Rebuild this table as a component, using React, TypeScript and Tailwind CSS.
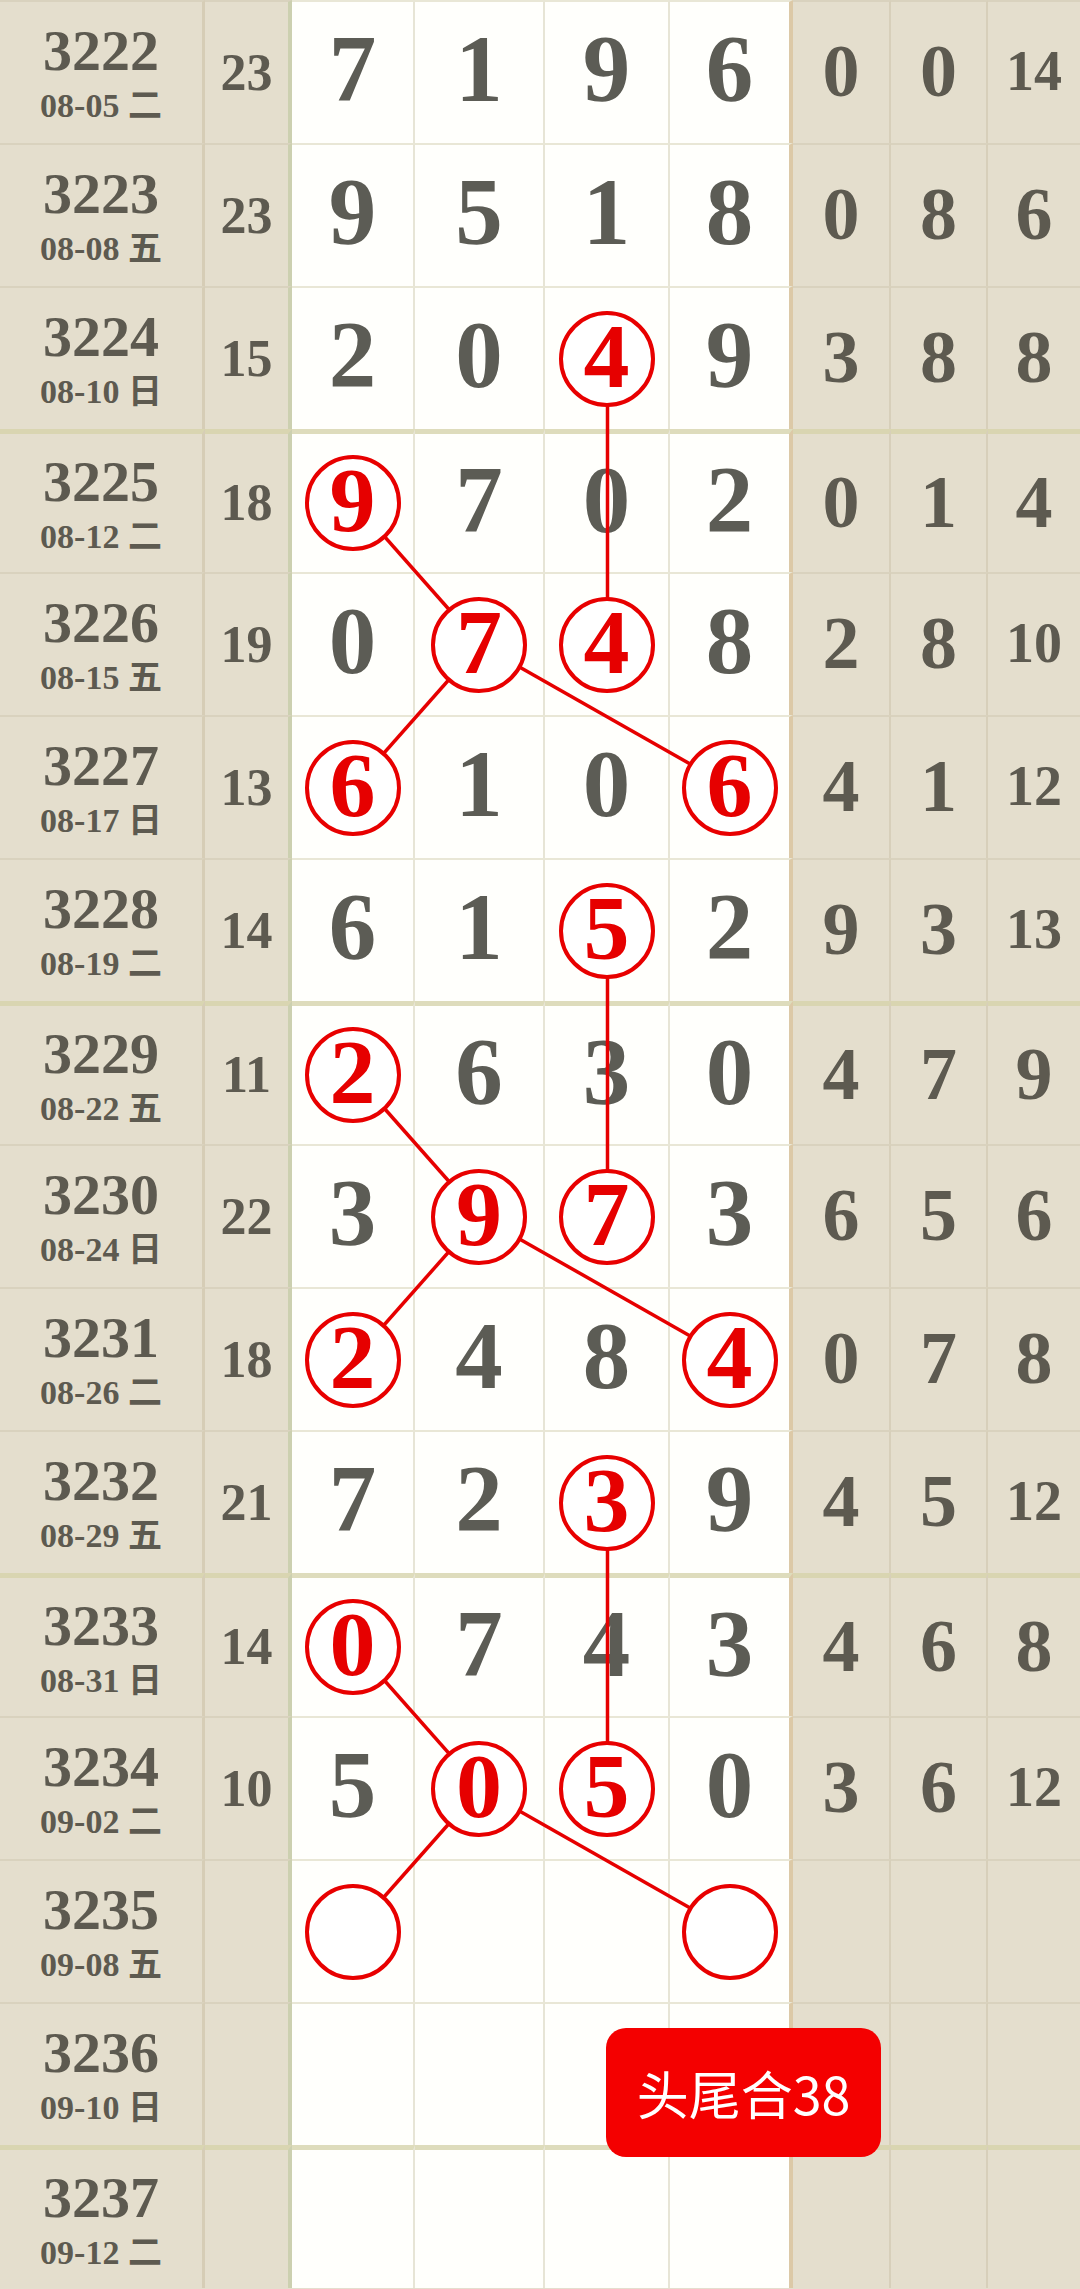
import React from "react";

type Row = {
  no: string;
  date: string;
  wd: string;
  sum: string;
  d: string[];
  r: string[];
};

const rows: Row[] = [
  { no: "3222", date: "08-05", wd: "二", sum: "23", d: ["7", "1", "9", "6"], r: ["0", "0", "14"] },
  { no: "3223", date: "08-08", wd: "五", sum: "23", d: ["9", "5", "1", "8"], r: ["0", "8", "6"] },
  { no: "3224", date: "08-10", wd: "日", sum: "15", d: ["2", "0", "4", "9"], r: ["3", "8", "8"] },
  { no: "3225", date: "08-12", wd: "二", sum: "18", d: ["9", "7", "0", "2"], r: ["0", "1", "4"] },
  { no: "3226", date: "08-15", wd: "五", sum: "19", d: ["0", "7", "4", "8"], r: ["2", "8", "10"] },
  { no: "3227", date: "08-17", wd: "日", sum: "13", d: ["6", "1", "0", "6"], r: ["4", "1", "12"] },
  { no: "3228", date: "08-19", wd: "二", sum: "14", d: ["6", "1", "5", "2"], r: ["9", "3", "13"] },
  { no: "3229", date: "08-22", wd: "五", sum: "11", d: ["2", "6", "3", "0"], r: ["4", "7", "9"] },
  { no: "3230", date: "08-24", wd: "日", sum: "22", d: ["3", "9", "7", "3"], r: ["6", "5", "6"] },
  { no: "3231", date: "08-26", wd: "二", sum: "18", d: ["2", "4", "8", "4"], r: ["0", "7", "8"] },
  { no: "3232", date: "08-29", wd: "五", sum: "21", d: ["7", "2", "3", "9"], r: ["4", "5", "12"] },
  { no: "3233", date: "08-31", wd: "日", sum: "14", d: ["0", "7", "4", "3"], r: ["4", "6", "8"] },
  { no: "3234", date: "09-02", wd: "二", sum: "10", d: ["5", "0", "5", "0"], r: ["3", "6", "12"] },
  { no: "3235", date: "09-08", wd: "五", sum: "", d: ["", "", "", ""], r: ["", "", ""] },
  { no: "3236", date: "09-10", wd: "日", sum: "", d: ["", "", "", ""], r: ["", "", ""] },
  { no: "3237", date: "09-12", wd: "二", sum: "", d: ["", "", "", ""], r: ["", "", ""] },
];

const circles: Record<string, string> = {
  "2-2": "4",
  "3-0": "9",
  "4-1": "7",
  "4-2": "4",
  "5-0": "6",
  "5-3": "6",
  "6-2": "5",
  "7-0": "2",
  "8-1": "9",
  "8-2": "7",
  "9-0": "2",
  "9-3": "4",
  "10-2": "3",
  "11-0": "0",
  "12-1": "0",
  "12-2": "5",
  "13-0": "",
  "13-3": "",
};

const colX = [353.5, 480, 607.5, 731.5];
const rowY = (r: number) => 143 * r + 72.5;

const lines: [number, number, number, number][] = [];
[2, 6, 10].forEach((b) => {
  lines.push([b, 2, b + 2, 2]);
  lines.push([b + 1, 0, b + 2, 1]);
  lines.push([b + 2, 1, b + 3, 0]);
  lines.push([b + 2, 1, b + 3, 3]);
});

const serif = { fontFamily: '"Liberation Serif", "Noto Sans CJK SC", serif' };

export default function App() {
  return (
    <div className="relative w-[1080px] h-[2289px] overflow-hidden bg-[#e4decd]" style={serif}>
      {rows.map((row, ri) => {
        const group = ri === 3 || ri === 7 || ri === 11 || ri === 15;
        const tb = group ? "border-t-[5px] border-t-[#d9d5b1]" : "border-t-2 border-t-[#d9d2be]";
        const tw = group ? "border-t-[5px] border-t-[#dedcbc]" : "border-t-2 border-t-[#e9e7d6]";
        return (
          <div
            key={row.no}
            className="grid grid-cols-[205px_87px_123px_130px_125px_123px_98px_97px_92px] h-[143px]"
          >
            <div className={`${tb} border-r-[3px] border-r-[#d6cdb6] bg-[#e4decd] flex flex-col items-center justify-center gap-[9px] text-[#5d5a50] font-bold`}>
              <div className="text-[58px] leading-none">{row.no}</div>
              <div className="text-[34px] leading-none whitespace-pre">
                {row.date} {row.wd}
              </div>
            </div>
            <div className={`${tb} border-r-[4px] border-r-[#ccd0b0] bg-[#e4decd] flex items-center justify-center text-[#5d5a50] font-bold text-[52px] leading-none`}>
              {row.sum}
            </div>
            {row.d.map((v, ci) => {
              const key = `${ri}-${ci}`;
              const isC = key in circles;
              const last = ci === 3;
              return (
                <div
                  key={ci}
                  className={`${tw} ${last ? "border-r-[4px] border-r-[#dcc9a7]" : "border-r-2 border-r-[#e7e5d6]"} bg-[#fffffc] flex items-center justify-center`}
                >
                  {isC ? (
                    <div className="relative z-[2] w-[96px] h-[96px] rounded-full border-[4px] border-[#e80000] bg-white flex items-center justify-center pb-[6px] text-[#e60000] font-bold text-[92px] leading-none">
                      {circles[key]}
                    </div>
                  ) : (
                    <div className="pb-[6px] text-[#5c5c55] font-bold text-[95px] leading-none">{v}</div>
                  )}
                </div>
              );
            })}
            {row.r.map((v, ci) => (
              <div
                key={`r${ci}`}
                className={`${tb} ${ci < 2 ? "border-r-2 border-r-[#d7cfba]" : ""} bg-[#e4decd] flex items-center justify-center text-[#5d5a50] font-bold leading-none ${v.length > 1 ? "text-[56px]" : "text-[74px]"}`}
              >
                <span className="pb-[3px]">{v}</span>
              </div>
            ))}
          </div>
        );
      })}

      <svg
        className="absolute left-0 top-0 z-[1] pointer-events-none"
        width={1080}
        height={2289}
        viewBox="0 0 1080 2289"
      >
        {lines.map(([r1, c1, r2, c2], i) => (
          <line
            key={i}
            x1={colX[c1]}
            y1={rowY(r1)}
            x2={colX[c2]}
            y2={rowY(r2)}
            stroke="#e60000"
            strokeWidth={3.5}
          />
        ))}
      </svg>

      <div
        className="absolute left-[606px] top-[2028px] z-[3] w-[275px] h-[129px] rounded-[20px] bg-[#f40000] flex items-center justify-center text-white text-[52px] leading-none"
        style={{ fontFamily: '"Noto Sans CJK SC", "Noto Sans", sans-serif' }}
      >
        头尾合38
      </div>
    </div>
  );
}
